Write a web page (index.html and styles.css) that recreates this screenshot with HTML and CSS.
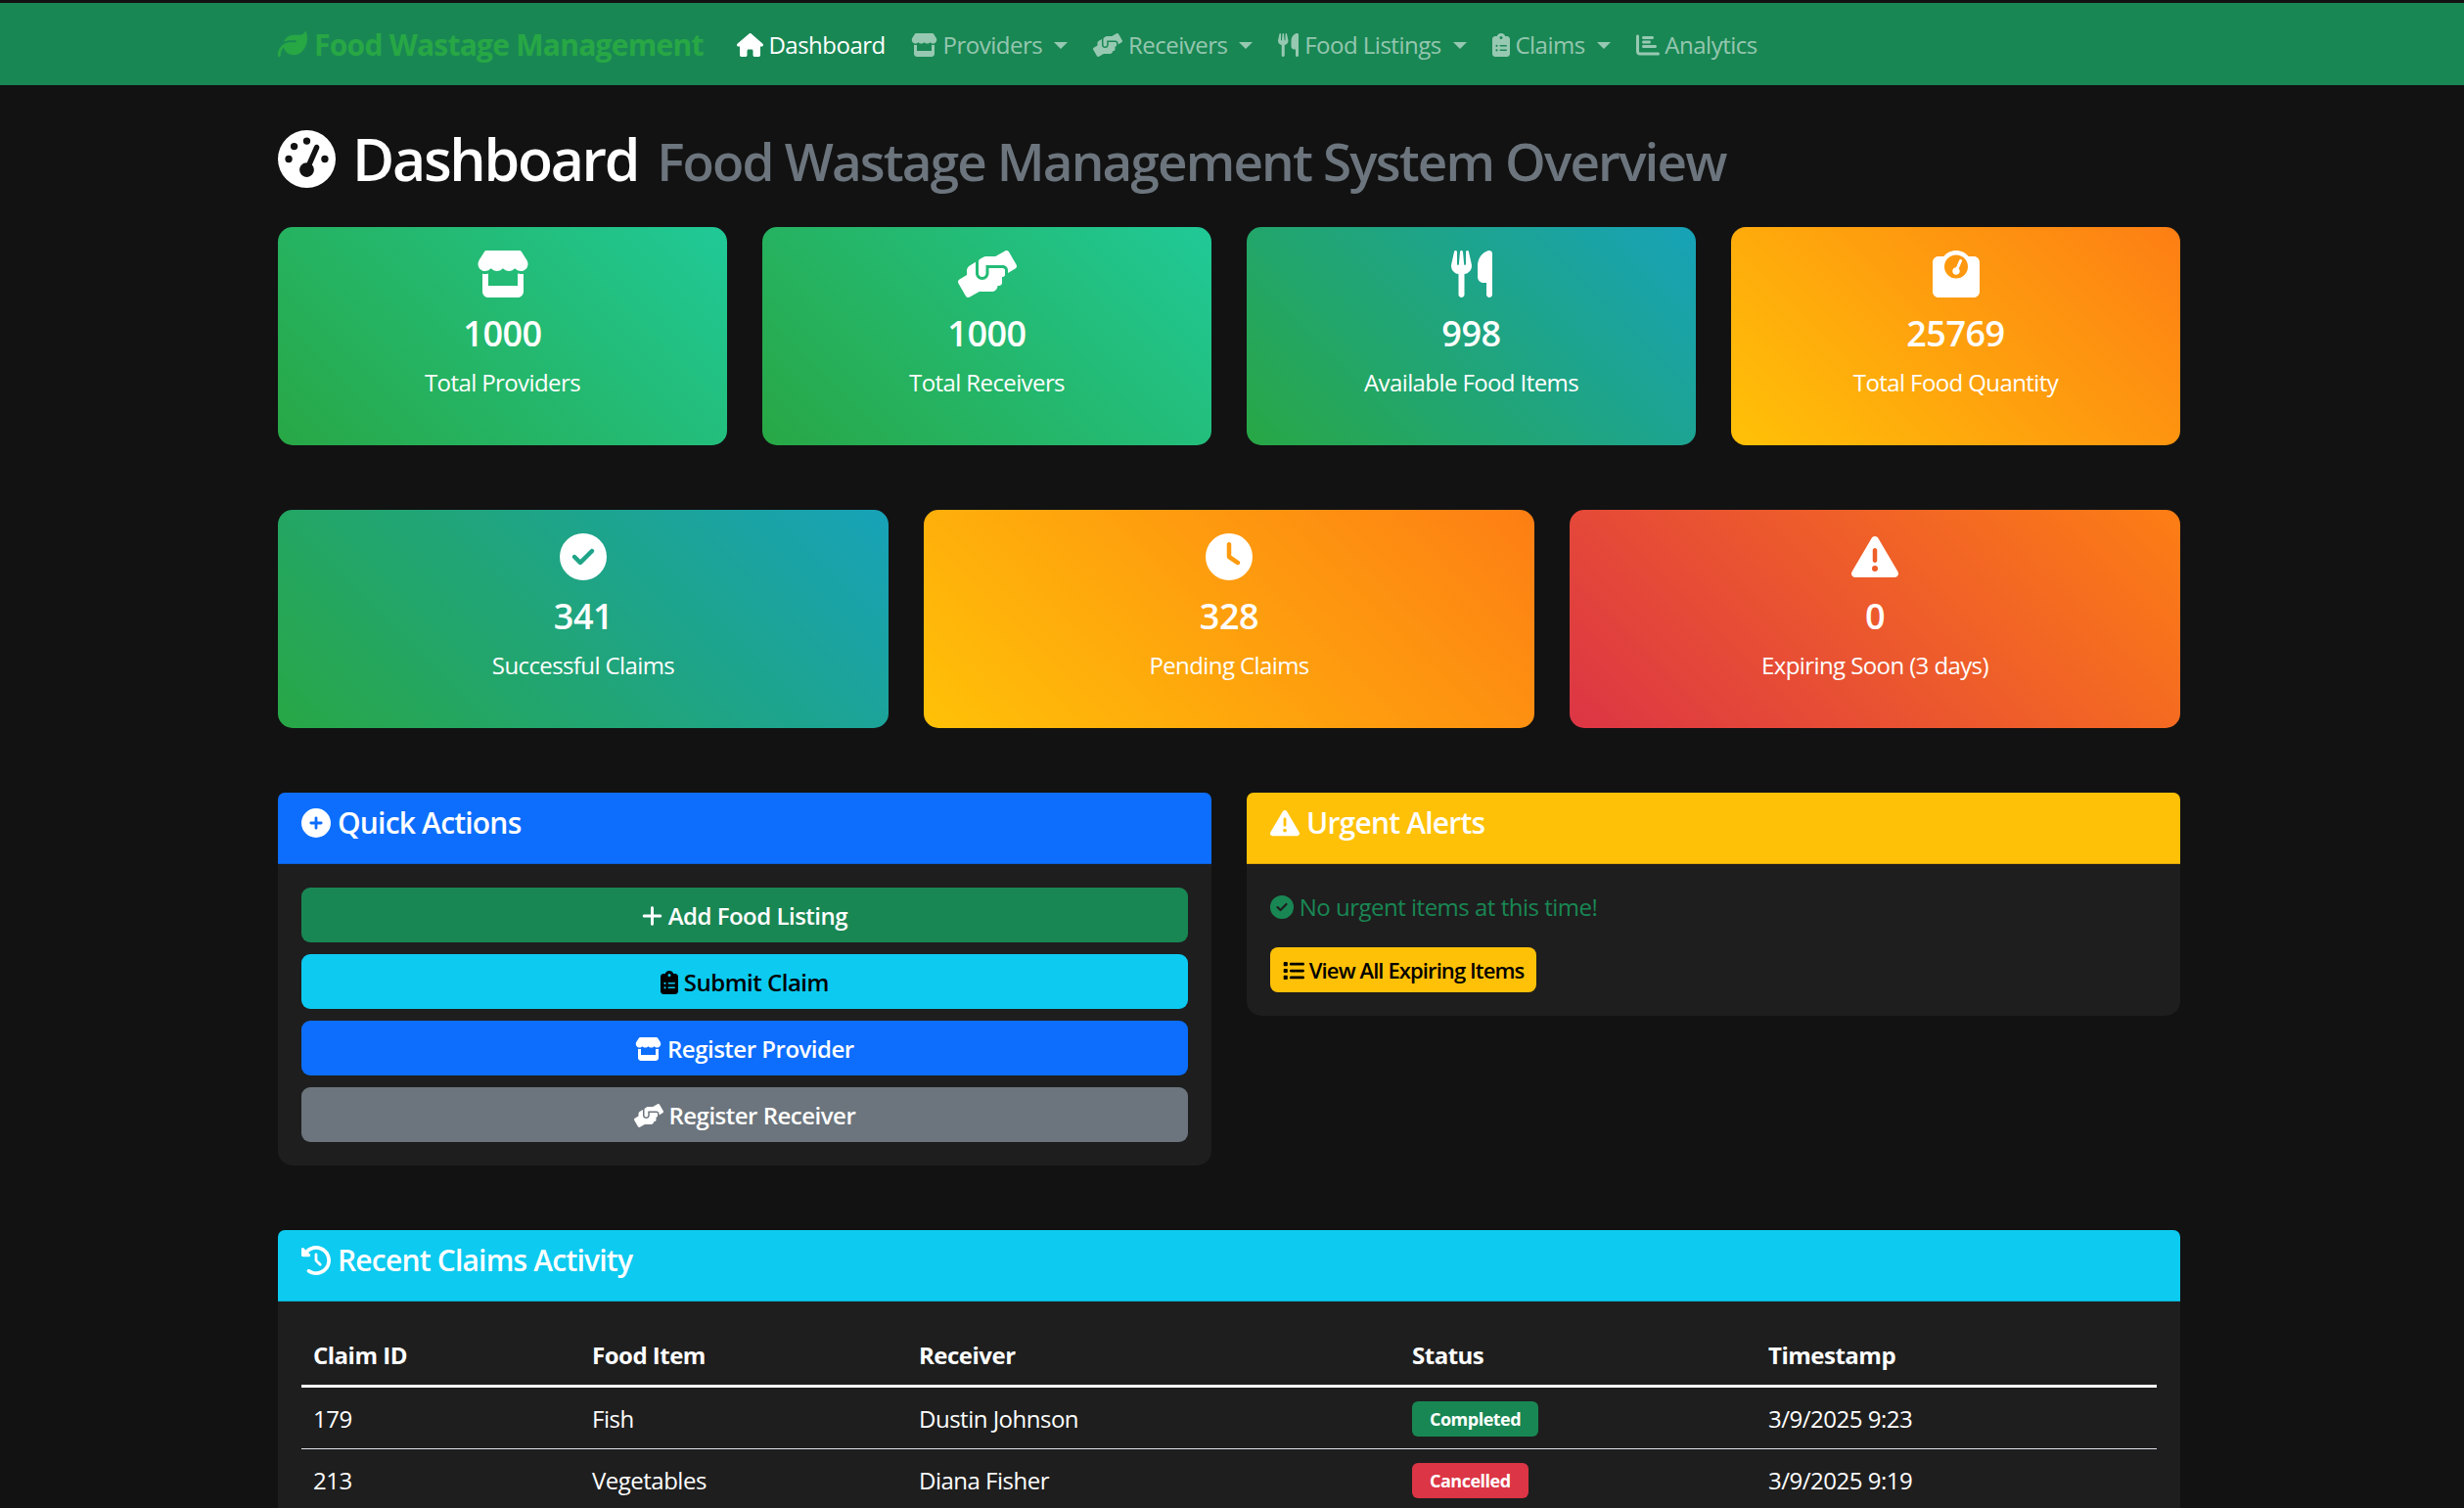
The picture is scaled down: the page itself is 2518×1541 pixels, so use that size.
FILE: index.html
```html
<!DOCTYPE html>
<html lang="en">
<head>
  <meta charset="UTF-8" />
  <title>Food Wastage Management</title>
  <link rel="stylesheet" href="styles.css">
</head>
<body>
  <svg class="sprite" xmlns="http://www.w3.org/2000/svg">
    <symbol id="i-leaf" viewBox="0 0 512 512"><path d="M272 96c-78.6 0-145.1 51.5-167.7 122.5c33.6-17 71.5-26.5 111.7-26.5h88c8.8 0 16 7.2 16 16s-7.2 16-16 16H288 216s0 0 0 0c-16.6 0-32.7 1.9-48.2 5.4c-25.9 5.9-50 16.4-71.4 30.7c0 0 0 0 0 0C38.3 298.8 0 364.9 0 440v16c0 13.3 10.7 24 24 24s24-10.7 24-24V440c0-48.7 20.7-92.5 53.8-123.2C121.6 392.3 190.3 448 272 448l1 0c132.1-.7 239-130.9 239-291.4c0-42.6-7.5-83.1-21.1-119.6c-2.6-7-12.8-6.7-16.5 0C455.5 72 418.5 96 376 96H272z"/></symbol>
    <symbol id="i-home" viewBox="0 0 576 512"><path d="M575.8 255.5c0 18-15 32.1-32 32.1h-32l.7 160.2c0 2.7-.2 5.4-.5 8.1V472c0 22.1-17.9 40-40 40H456c-1.1 0-2.2 0-3.3-.1c-1.4 .1-2.8 .1-4.2 .1H416 392c-22.1 0-40-17.9-40-40V448 384c0-17.7-14.3-32-32-32H256c-17.7 0-32 14.3-32 32v64 24c0 22.1-17.9 40-40 40H160 128.1c-1.5 0-3-.1-4.5-.2c-1.2 .1-2.4 .2-3.6 .2H104c-22.1 0-40-17.9-40-40V360c0-.9 0-1.9 .1-2.8V287.6H32c-18 0-32-14-32-32.1c0-9 3-17 10-24L266.4 8c7-7 15-8 22-8s15 2 21 7L564.8 231.5c8 7 12 15 11 24z"/></symbol>
    <symbol id="i-store" viewBox="0 0 576 512"><path d="M547.6 103.8L490.3 13.1C485.2 5 476.1 0 466.4 0H109.6C99.9 0 90.8 5 85.7 13.1L28.3 103.8c-29.6 46.8-3.4 111.9 51.9 119.4c4 .5 8.1 .8 12.1 .8c26.1 0 49.3-11.4 65.2-29c15.9 17.6 39.1 29 65.2 29c26.1 0 49.3-11.4 65.2-29c15.9 17.6 39.1 29 65.2 29c26.2 0 49.3-11.4 65.2-29c16 17.6 39.1 29 65.2 29c4.1 0 8.1-.3 12.1-.8c55.5-7.4 81.8-72.5 52.1-119.4zM499.7 254.9l-.1 0c-5.3 .7-10.7 1.1-16.2 1.1c-12.4 0-24.3-1.9-35.4-5.3V384H128V250.6c-11.2 3.5-23.2 5.4-35.6 5.4c-5.5 0-11-.4-16.3-1.1l-.1 0c-4.1-.6-8.1-1.3-12-2.3V384v64c0 35.3 28.7 64 64 64H448c35.3 0 64-28.7 64-64V384 252.6c-4 1-8 1.8-12.3 2.3z"/></symbol>
    <symbol id="i-hands" viewBox="0 0 640 512"><path d="M488 192H336v56c0 39.7-32.3 72-72 72s-72-32.3-72-72V126.4l-64.9 39C107.8 176.9 96 197.8 96 220.2v47.3l-80 46.2C.7 322.5-4.6 342.1 4.3 357.4l80 138.6c8.8 15.3 28.4 20.5 43.7 11.7L231.4 448H368c35.3 0 64-28.7 64-64h16c17.7 0 32-14.3 32-32v-64h8c13.3 0 24-10.7 24-24v-48c0-13.3-10.7-24-24-24zm147.7-37.4L555.7 16C546.9.7 527.3-4.5 512 4.3L408.6 64H306.4c-12 0-23.7 3.4-33.9 9.7L239 94.6c-9.4 5.8-15 16.1-15 27.1V248c0 22.1 17.9 40 40 40s40-17.9 40-40v-88h184c30.9 0 56 25.1 56 56v28.5l80-46.2c15.3-8.9 20.5-28.4 11.7-43.7z"/></symbol>
    <symbol id="i-utensils" viewBox="0 0 448 512"><path d="M416 0C400 0 288 32 288 176V288c0 35.3 28.7 64 64 64h32V480c0 17.7 14.3 32 32 32s32-14.3 32-32V352 240 32c0-17.7-14.3-32-32-32zM64 16C64 7.8 57.9 1 49.7 .1S34.2 4.6 32.4 12.5L2.1 148.8C.7 155.1 0 161.5 0 167.9c0 45.9 35.1 83.6 80 87.7V480c0 17.7 14.3 32 32 32s32-14.3 32-32V255.6c44.9-4.1 80-41.8 80-87.7c0-6.4-.7-12.8-2.1-19.1L191.6 12.5c-1.8-8-9.3-13.3-17.4-12.4S160 7.8 160 16V150.2c0 5.4-4.4 9.8-9.8 9.8c-5.1 0-9.3-3.9-9.8-9L127.9 14.6C127.2 6.3 120.3 0 112 0s-15.2 6.3-15.9 14.6L83.7 151c-.5 5.1-4.7 9-9.8 9c-5.4 0-9.8-4.4-9.8-9.8V16zm48.3 152l-.3 0-.3 0 .3-.7 .3 .7z"/></symbol>
    <symbol id="i-scale" viewBox="0 0 512 512"><path d="M128 176a128 128 0 1 1 256 0 128 128 0 1 1 -256 0zM391.8 64C359.5 24.9 310.7 0 256 0S152.5 24.9 120.2 64H64C28.7 64 0 92.7 0 128V448c0 35.3 28.7 64 64 64H448c35.3 0 64-28.7 64-64V128c0-35.3-28.7-64-64-64H391.8zM296 224c0-10.6-4.1-20.2-10.9-27.4l33.6-78.3c3.5-8.1-.3-17.5-8.4-21s-17.5 .3-21 8.4L255.7 184c-22 .1-39.7 18-39.7 40c0 22.1 17.9 40 40 40s40-17.9 40-40z"/></symbol>
    <symbol id="i-clipboard" viewBox="0 0 384 512"><path d="M192 0c-41.8 0-77.4 26.7-90.5 64H64C28.7 64 0 92.7 0 128V448c0 35.3 28.7 64 64 64H320c35.3 0 64-28.7 64-64V128c0-35.3-28.7-64-64-64H282.5C269.4 26.7 233.8 0 192 0zm0 64a32 32 0 1 1 0 64 32 32 0 1 1 0-64zM72 272a24 24 0 1 1 48 0 24 24 0 1 1 -48 0zm104-16H304c8.8 0 16 7.2 16 16s-7.2 16-16 16H176c-8.8 0-16-7.2-16-16s7.2-16 16-16zM72 368a24 24 0 1 1 48 0 24 24 0 1 1 -48 0zm88 0c0-8.8 7.2-16 16-16H304c8.8 0 16 7.2 16 16s-7.2 16-16 16H176c-8.8 0-16-7.2-16-16z"/></symbol>
    <symbol id="i-chart" viewBox="0 0 512 512"><path d="M32 32c17.7 0 32 14.3 32 32V400c0 8.8 7.2 16 16 16H480c17.7 0 32 14.3 32 32s-14.3 32-32 32H80c-44.2 0-80-35.8-80-80V64C0 46.3 14.3 32 32 32zm96 64c0-17.7 14.3-32 32-32l192 0c17.7 0 32 14.3 32 32s-14.3 32-32 32l-192 0c-17.7 0-32-14.3-32-32zm32 64H288c17.7 0 32 14.3 32 32s-14.3 32-32 32H160c-17.7 0-32-14.3-32-32s14.3-32 32-32zm0 96H416c17.7 0 32 14.3 32 32s-14.3 32-32 32H160c-17.7 0-32-14.3-32-32s14.3-32 32-32z"/></symbol>
    <symbol id="i-gauge" viewBox="0 0 512 512"><path d="M0 256a256 256 0 1 1 512 0A256 256 0 1 1 0 256zM288 96a32 32 0 1 0 -64 0 32 32 0 1 0 64 0zM256 416c35.3 0 64-28.7 64-64c0-17.4-6.9-33.1-18.1-44.6L366 161.7c5.3-12.1-.2-26.3-12.3-31.6s-26.3 .2-31.6 12.3L257.9 288c-.6 0-1.3 0-1.9 0c-35.3 0-64 28.7-64 64s28.7 64 64 64zM176 144a32 32 0 1 0 -64 0 32 32 0 1 0 64 0zM96 288a32 32 0 1 0 0-64 32 32 0 1 0 0 64zm352-32a32 32 0 1 0 -64 0 32 32 0 1 0 64 0z"/></symbol>
    <symbol id="i-check" viewBox="0 0 512 512"><path d="M256 512A256 256 0 1 0 256 0a256 256 0 1 0 0 512zM369 209L241 337c-9.4 9.4-24.6 9.4-33.9 0l-64-64c-9.4-9.4-9.4-24.6 0-33.9s24.6-9.4 33.9 0l47 47L335 175c9.4-9.4 24.6-9.4 33.9 0s9.4 24.6 0 33.9z"/></symbol>
    <symbol id="i-clock" viewBox="0 0 512 512"><path d="M256 0a256 256 0 1 1 0 512A256 256 0 1 1 256 0zM232 120V256c0 8 4 15.5 10.7 20l96 64c11 7.4 25.9 4.4 33.3-6.7s4.4-25.9-6.7-33.3L280 243.2V120c0-13.3-10.7-24-24-24s-24 10.7-24 24z"/></symbol>
    <symbol id="i-warn" viewBox="0 0 512 512"><path d="M256 32c14.2 0 27.3 7.5 34.5 19.8l216 368c7.3 12.4 7.3 27.7 .2 40.1S486.3 480 472 480H40c-14.3 0-27.6-7.7-34.7-20.1s-7-27.8 .2-40.1l216-368C228.7 39.5 241.8 32 256 32zm0 128c-13.3 0-24 10.7-24 24V296c0 13.3 10.7 24 24 24s24-10.7 24-24V184c0-13.3-10.7-24-24-24zm32 224a32 32 0 1 0 -64 0 32 32 0 1 0 64 0z"/></symbol>
    <symbol id="i-plus-circle" viewBox="0 0 512 512"><path d="M256 512A256 256 0 1 0 256 0a256 256 0 1 0 0 512zM232 344V280H168c-13.3 0-24-10.7-24-24s10.7-24 24-24h64V168c0-13.3 10.7-24 24-24s24 10.7 24 24v64h64c13.3 0 24 10.7 24 24s-10.7 24-24 24H280v64c0 13.3-10.7 24-24 24s-24-10.7-24-24z"/></symbol>
    <symbol id="i-plus" viewBox="0 0 448 512"><path d="M256 80c0-17.7-14.3-32-32-32s-32 14.3-32 32V224H48c-17.7 0-32 14.3-32 32s14.3 32 32 32H192V432c0 17.7 14.3 32 32 32s32-14.3 32-32V288H400c17.7 0 32-14.3 32-32s-14.3-32-32-32H256V80z"/></symbol>
    <symbol id="i-list" viewBox="0 0 512 512"><path d="M40 48C26.7 48 16 58.7 16 72v48c0 13.3 10.7 24 24 24H88c13.3 0 24-10.7 24-24V72c0-13.3-10.7-24-24-24H40zM192 64c-17.7 0-32 14.3-32 32s14.3 32 32 32H480c17.7 0 32-14.3 32-32s-14.3-32-32-32H192zm0 160c-17.7 0-32 14.3-32 32s14.3 32 32 32H480c17.7 0 32-14.3 32-32s-14.3-32-32-32H192zm0 160c-17.7 0-32 14.3-32 32s14.3 32 32 32H480c17.7 0 32-14.3 32-32s-14.3-32-32-32H192zM16 232v48c0 13.3 10.7 24 24 24H88c13.3 0 24-10.7 24-24V232c0-13.3-10.7-24-24-24H40c-13.3 0-24 10.7-24 24zM40 368c-13.3 0-24 10.7-24 24v48c0 13.3 10.7 24 24 24H88c13.3 0 24-10.7 24-24V392c0-13.3-10.7-24-24-24H40z"/></symbol>
    <symbol id="i-history" viewBox="0 0 512 512"><path d="M75 75L41 41C25.9 25.9 0 36.6 0 57.9V168c0 13.3 10.7 24 24 24H134.1c21.4 0 32.1-25.9 17-41l-30.8-30.8C155 85.5 203 64 256 64c106 0 192 86 192 192s-86 192-192 192c-40.8 0-78.6-12.7-109.7-34.4c-14.5-10.1-34.4-6.6-44.6 7.9s-6.6 34.4 7.9 44.6C151.2 495 201.7 512 256 512c141.4 0 256-114.6 256-256S397.4 0 256 0C185.3 0 121.3 28.7 75 75zm181 53c-13.3 0-24 10.7-24 24V256c0 6.4 2.5 12.5 7 17l72 72c9.4 9.4 24.6 9.4 33.9 0s9.4-24.6 0-33.9l-65-65V152c0-13.3-10.7-24-24-24z"/></symbol>
  </svg>

  <nav class="navbar">
    <div class="nav-inner">
      <a class="brand"><svg class="icon"><use href="#i-leaf"/></svg> Food Wastage Management</a>
      <ul class="nav-links">
        <li class="active"><svg class="icon w-home"><use href="#i-home"/></svg> Dashboard</li>
        <li class="dropdown"><svg class="icon w-home"><use href="#i-store"/></svg> Providers</li>
        <li class="dropdown"><svg class="icon w-hands"><use href="#i-hands"/></svg> Receivers</li>
        <li class="dropdown"><svg class="icon w-fork"><use href="#i-utensils"/></svg> Food Listings</li>
        <li class="dropdown"><svg class="icon w-clip"><use href="#i-clipboard"/></svg> Claims</li>
        <li><svg class="icon"><use href="#i-chart"/></svg> Analytics</li>
      </ul>
    </div>
  </nav>

  <main class="container">
    <h1 class="page-title"><svg class="icon"><use href="#i-gauge"/></svg> Dashboard <small>Food Wastage Management System Overview</small></h1>

    <section class="stats four">
      <div class="stat green-teal"><svg class="icon w-home"><use href="#i-store"/></svg><h3>1000</h3><p>Total Providers</p></div>
      <div class="stat green-teal"><svg class="icon w-hands"><use href="#i-hands"/></svg><h3>1000</h3><p>Total Receivers</p></div>
      <div class="stat green-blue"><svg class="icon w-fork"><use href="#i-utensils"/></svg><h3>998</h3><p>Available Food Items</p></div>
      <div class="stat amber"><svg class="icon"><use href="#i-scale"/></svg><h3>25769</h3><p>Total Food Quantity</p></div>
    </section>

    <section class="stats three">
      <div class="stat green-blue"><svg class="icon"><use href="#i-check"/></svg><h3>341</h3><p>Successful Claims</p></div>
      <div class="stat amber"><svg class="icon"><use href="#i-clock"/></svg><h3>328</h3><p>Pending Claims</p></div>
      <div class="stat red"><svg class="icon"><use href="#i-warn"/></svg><h3>0</h3><p>Expiring Soon (3 days)</p></div>
    </section>

    <section class="panels">
      <div class="card">
        <div class="card-header bg-blue"><svg class="icon"><use href="#i-plus-circle"/></svg> Quick Actions</div>
        <div class="card-body actions">
          <a class="btn btn-green"><svg class="icon w-fork"><use href="#i-plus"/></svg> Add Food Listing</a>
          <a class="btn btn-cyan"><svg class="icon w-clip"><use href="#i-clipboard"/></svg> Submit Claim</a>
          <a class="btn btn-blue"><svg class="icon w-home"><use href="#i-store"/></svg> Register Provider</a>
          <a class="btn btn-gray"><svg class="icon w-hands"><use href="#i-hands"/></svg> Register Receiver</a>
        </div>
      </div>
      <div class="card align-top">
        <div class="card-header bg-yellow"><svg class="icon"><use href="#i-warn"/></svg> Urgent Alerts</div>
        <div class="card-body">
          <p class="no-urgent"><svg class="icon"><use href="#i-check"/></svg> No urgent items at this time!</p>
          <a class="btn-small"><svg class="icon"><use href="#i-list"/></svg> View All Expiring Items</a>
        </div>
      </div>
    </section>

    <section class="card">
      <div class="card-header bg-cyan"><svg class="icon"><use href="#i-history"/></svg> Recent Claims Activity</div>
      <div class="card-body">
        <table class="claims">
          <thead>
            <tr><th class="col-id">Claim ID</th><th class="col-food">Food Item</th><th class="col-rec">Receiver</th><th class="col-status">Status</th><th>Timestamp</th></tr>
          </thead>
          <tbody>
            <tr><td>179</td><td>Fish</td><td>Dustin Johnson</td><td><span class="badge done">Completed</span></td><td>3/9/2025 9:23</td></tr>
            <tr><td>213</td><td>Vegetables</td><td>Diana Fisher</td><td><span class="badge cancelled">Cancelled</span></td><td>3/9/2025 9:19</td></tr>
          </tbody>
        </table>
      </div>
    </section>
  </main>
</body>
</html>
```

FILE: styles.css
```css
* {
  box-sizing: border-box;
}
html, body {
  height: 100%;
  overflow: hidden;
}
body {
  margin: 0;
  padding-top: 3px;
  background: #121212;
  color: #fff;
  font-family: "Open Sans", "Noto Sans", sans-serif;
  font-size: 24px;
  letter-spacing: -0.5px;
}
.sprite {
  display: none;
}
.icon {
  width: 1em;
  height: 1em;
  fill: currentColor;
  vertical-align: -0.125em;
}
.w-home {
  width: 1.125em;
}
.w-hands {
  width: 1.25em;
}
.w-fork {
  width: 0.875em;
}
.w-clip {
  width: 0.75em;
}

/* navbar */
.navbar {
  height: 84px;
  background: #198754;
}
.nav-inner {
  display: flex;
  align-items: center;
  gap: 34px;
  height: 100%;
  padding-left: 284px;
}
.brand {
  color: #28a745;
  font-size: 30px;
  font-weight: 700;
  letter-spacing: -0.75px;
}
.nav-links {
  display: flex;
  gap: 26px;
  margin: 0;
  padding: 0;
  list-style: none;
  color: rgba(255,255,255,0.55);
}
.nav-links .active {
  color: #fff;
}
.dropdown::after {
  content: "";
  display: inline-block;
  margin-left: 12px;
  vertical-align: 5px;
  border-top: 7px solid;
  border-left: 7px solid transparent;
  border-right: 7px solid transparent;
}

/* page */
.container {
  width: 1944px;
  margin-left: 284px;
}
.page-title {
  margin: 41px 0 33px;
  font-size: 59px;
  font-weight: 600;
  line-height: 68px;
  letter-spacing: -2.3px;
  word-spacing: 4px;
}
.page-title small {
  margin-left: 2px;
  color: #6c757d;
  font-size: 53px;
  letter-spacing: -1.85px;
  word-spacing: 0;
}
.stats {
  display: grid;
  gap: 36px;
  margin-bottom: 66px;
}
.four {
  grid-template-columns: repeat(4, 1fr);
}
.three {
  grid-template-columns: repeat(3, 1fr);
}
.stat {
  height: 223px;
  padding-top: 24px;
  border-radius: 15px;
  text-align: center;
}
.stat .icon {
  display: block;
  margin: 0 auto;
  font-size: 48px;
}
.stat h3 {
  margin: 15px 0 0;
  font-size: 36px;
  font-weight: 600;
  line-height: 44px;
}
.stat p {
  margin: 10px 0 0;
  line-height: 36px;
  letter-spacing: -0.6px;
}
.green-teal {
  background: linear-gradient(45deg, #28a745, #20c997);
}
.green-blue {
  background: linear-gradient(45deg, #28a745, #17a2b8);
}
.amber {
  background: linear-gradient(45deg, #ffc107, #fd7e14);
}
.red {
  background: linear-gradient(45deg, #dc3545, #fd7e14);
}

/* cards */
.panels {
  display: grid;
  grid-template-columns: 1fr 1fr;
  gap: 36px;
  margin-bottom: 66px;
}
.align-top {
  align-self: start;
}
.card {
  border-radius: 15px;
  background: #1e1e1e;
}
.card-header {
  height: 73px;
  padding: 13px 24px;
  border-radius: 7px 7px 0 0;
  border-bottom: 1px solid rgba(0,0,0,0.13);
  font-size: 30px;
  font-weight: 600;
  line-height: 36px;
  letter-spacing: -0.8px;
}
.bg-blue {
  background: #0d6efd;
}
.bg-yellow {
  background: #ffc107;
}
.bg-cyan {
  background: #0dcaf0;
}
.card-body {
  padding: 24px;
}
.actions {
  display: flex;
  flex-direction: column;
  gap: 12px;
}
.btn {
  display: block;
  height: 56px;
  border-radius: 9px;
  color: #fff;
  font-weight: 600;
  line-height: 58px;
  text-align: center;
}
.btn-green {
  background: #198754;
}
.btn-cyan {
  background: #0dcaf0;
  color: #000;
}
.btn-blue {
  background: #0d6efd;
}
.btn-gray {
  background: #6c757d;
}
.no-urgent {
  margin: 2px 0 23px;
  color: #198754;
  line-height: 36px;
}
.btn-small {
  display: inline-block;
  height: 46px;
  padding: 0 13px;
  border-radius: 8px;
  background: #ffc107;
  color: #000;
  font-size: 22px;
  font-weight: 600;
  line-height: 46px;
  letter-spacing: -0.9px;
}

/* table */
.claims {
  width: 100%;
  border-collapse: collapse;
}
.claims th {
  padding: 12px;
  font-weight: 700;
  line-height: 37px;
  text-align: left;
  border-bottom: 3px solid #fff;
}
.claims td {
  height: 64px;
  padding: 0 12px;
  border-bottom: 1px solid #dee2e6;
}
.col-id {
  width: 285px;
}
.col-food {
  width: 334px;
}
.col-rec {
  width: 504px;
}
.col-status {
  width: 364px;
}
.badge {
  display: inline-block;
  height: 36px;
  padding: 0 18px;
  border-radius: 6px;
  font-size: 18px;
  font-weight: 700;
  line-height: 36px;
}
.done {
  background: #198754;
}
.cancelled {
  background: #dc3545;
}
```
